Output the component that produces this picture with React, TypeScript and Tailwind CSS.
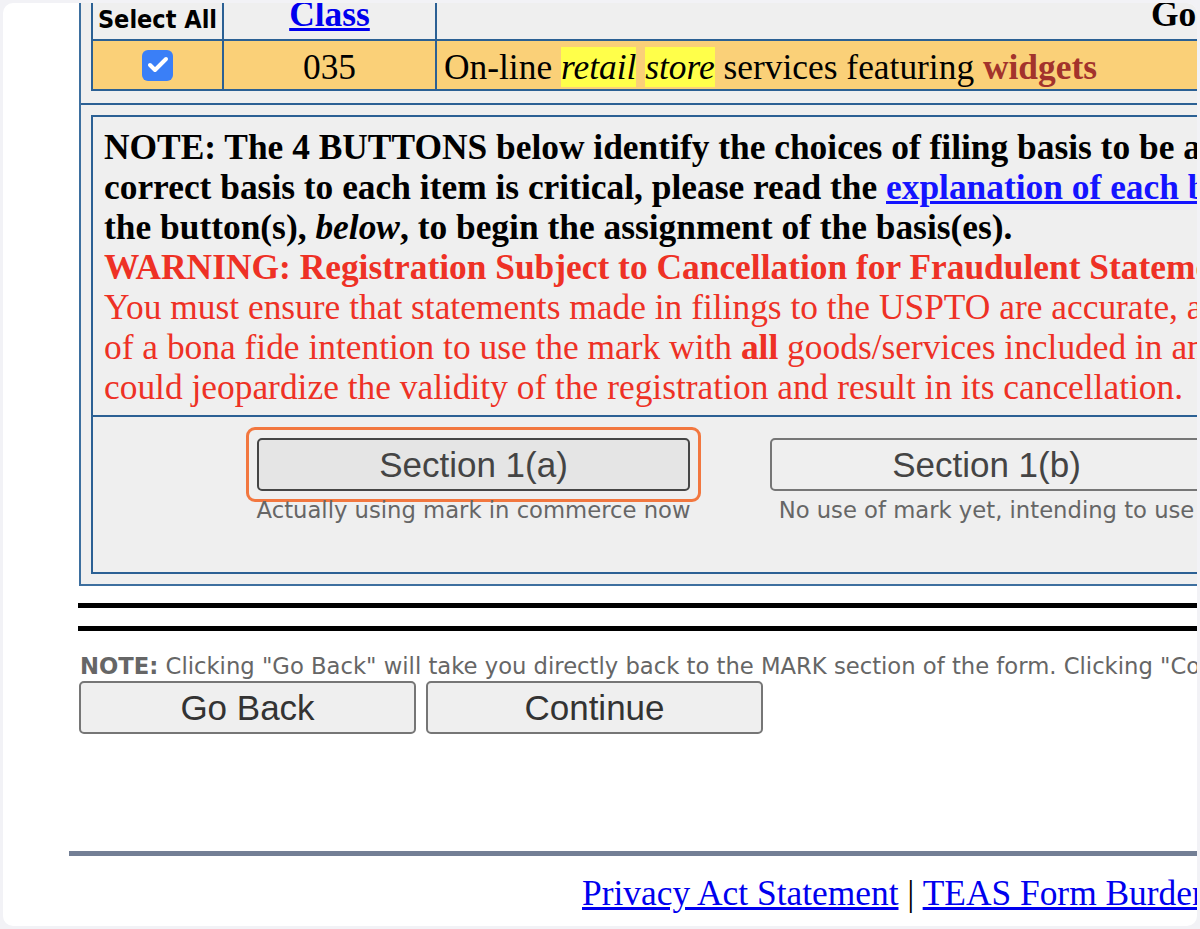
import { Check } from "lucide-react";

const serif = "font-['Liberation_Serif','Times_New_Roman',serif]";
const tahoma = "font-['DejaVu_Sans',sans-serif]";
const tahomaBold = "font-['DejaVu_Sans_Condensed','DejaVu_Sans',sans-serif]";
const arial = "font-['Liberation_Sans',Arial,sans-serif]";

const line = "border-[#2b6094]";

function BasisButton({ label, hint, focused }: { label: string; hint: string; focused?: boolean }) {
  const btn = (
    <button
      className={`h-[53px] w-[433px] rounded-[5px] border-2 ${arial} text-[35px] leading-none text-[#444] ${
        focused ? "border-[#454545] bg-[#e5e5e5]" : "border-[#767676] bg-[#efefef]"
      }`}
    >
      {label}
    </button>
  );
  return (
    <div className="flex w-[433px] shrink-0 flex-col items-center">
      {focused ? (
        <div className="-m-[11px] rounded-[9px] border-[3px] border-[#f2773f] p-[8px]">{btn}</div>
      ) : (
        btn
      )}
      <div className={`mt-[6px] whitespace-nowrap ${tahoma} text-[22.7px] leading-[26px] text-[#666]`}>{hint}</div>
    </div>
  );
}

export default function App() {
  return (
    <div className="h-[929px] w-[1200px] overflow-hidden bg-[#f2f2f6] p-[3px]">
      <div className="h-full overflow-hidden rounded-[10px] bg-white">
        <div className="-mt-[13px] w-[2300px]">
          {/* goods / services panel */}
          <div className="ml-[76px] border-b-2 border-l-2 border-[#3d6f9f] bg-[#efefef]">
            <div className={`border-b-2 ${line} pb-[12px] pl-[10px]`}>
              <div className={`border-b-2 border-l-2 ${line}`}>
                {/* header row */}
                <div className={`flex h-[51px] border-b-2 ${line}`}>
                  <div className={`flex w-[131px] items-end justify-center border-r-2 ${line} pb-[7px]`}>
                    <span className={`${tahomaBold} text-[25px] font-bold leading-none text-black`}>Select All</span>
                  </div>
                  <div className={`flex w-[213px] items-end justify-center border-r-2 ${line} pb-[5px]`}>
                    <a className={`${serif} text-[35.4px] font-bold leading-[40px] text-[#0000ee] underline`} href="#">
                      Class
                    </a>
                  </div>
                  <div className="flex w-[1658px] items-end justify-center pb-[5px]">
                    <span className={`${serif} text-[35.4px] font-bold leading-[40px] text-black`}>Goods/Services</span>
                  </div>
                </div>
                {/* data row */}
                <div className={`flex h-[48px] bg-[#fad078] ${serif} text-[35.4px] leading-[40px] text-black`}>
                  <div className={`flex w-[131px] items-center justify-center border-r-2 ${line}`}>
                    <div className="flex h-[31px] w-[31px] items-center justify-center rounded-[6px] bg-[#3a7ff7]">
                      <Check className="h-[24px] w-[24px] text-white" strokeWidth={4} />
                    </div>
                  </div>
                  <div className={`flex w-[213px] items-center justify-center border-r-2 ${line} pt-[3px]`}>035</div>
                  <div className="flex w-[1658px] items-center whitespace-nowrap pl-[7px] pt-[3px]">
                    On-line&nbsp;<i className="bg-[#ffff4a]">retail</i>&nbsp;<i className="bg-[#ffff4a]">store</i>
                    &nbsp;services featuring&nbsp;<b className="text-[#a3332c]">widgets</b>
                  </div>
                </div>
              </div>
            </div>

            <div className="pb-[10px] pl-[10px] pt-[10px]">
              <div className={`border-2 ${line}`}>
                <div
                  className={`border-b-2 ${line} whitespace-nowrap pb-[8px] pl-[11px] pt-[10px] ${serif} text-[35.4px] leading-[40px]`}
                >
                  <div className="font-bold text-black">
                    NOTE: The 4 BUTTONS below identify the choices of filing basis to be assigned to the goods/services.
                    Assigning the
                  </div>
                  <div className="font-bold text-black">
                    correct basis to each item is critical, please read the{" "}
                    <a className="text-[#1414ff] underline" href="#">
                      explanation of each basis
                    </a>{" "}
                    before proceeding. Click on
                  </div>
                  <div className="font-bold text-black">
                    the button(s), <i>below</i>, to begin the assignment of the basis(es).
                  </div>
                  <div className="font-bold text-[#ee3125]">
                    WARNING: Registration Subject to Cancellation for Fraudulent Statements
                  </div>
                  <div className="text-[#ee3125]">
                    You must ensure that statements made in filings to the USPTO are accurate, as inaccuracies, including
                    untrue assertions
                  </div>
                  <div className="text-[#ee3125]">
                    of a bona fide intention to use the mark with <b>all</b> goods/services included in an application or
                    registration,
                  </div>
                  <div className="text-[#ee3125]">
                    could jeopardize the validity of the registration and result in its cancellation.
                  </div>
                </div>
                <div className="flex h-[155px] gap-[80px] pl-[164px] pt-[21px]">
                  <BasisButton label="Section 1(a)" hint="Actually using mark in commerce now" focused />
                  <BasisButton label="Section 1(b)" hint="No use of mark yet, intending to use" />
                  <BasisButton label="Section 44(d)" hint="Priority based on foreign filing" />
                  <BasisButton label="Section 44(e)" hint="Based on foreign registration" />
                </div>
              </div>
            </div>
          </div>

          {/* rules */}
          <div className="ml-[75px] mt-[17px] h-[5px] bg-black" />
          <div className="ml-[75px] mt-[18px] h-[5px] bg-black" />

          <div className={`ml-[77px] mt-[22px] whitespace-nowrap ${tahoma} text-[22.7px] leading-[26px] text-[#666]`}>
            <b>NOTE:</b> Clicking "Go Back" will take you directly back to the MARK section of the form. Clicking
            "Continue" will take you to the next section.
          </div>
          <div className="ml-[76px] mt-[2px] flex gap-[10px]">
            {["Go Back", "Continue"].map((t) => (
              <button
                key={t}
                className={`h-[53px] w-[337px] rounded-[5px] border-2 border-[#767676] bg-[#efefef] ${arial} text-[35px] leading-none text-[#333]`}
              >
                {t}
              </button>
            ))}
          </div>

          <div className="ml-[66px] mt-[117px] h-[5px] bg-[#737f95]" />
          <div className={`ml-[579px] mt-[17px] whitespace-nowrap ${serif} text-[35.4px] leading-[40px] text-black`}>
            <a className="text-[#0000ee] underline" href="#">
              Privacy Act Statement
            </a>{" "}
            |{" "}
            <a className="text-[#0000ee] underline" href="#">
              TEAS Form Burden Statement
            </a>
          </div>
        </div>
      </div>
    </div>
  );
}
